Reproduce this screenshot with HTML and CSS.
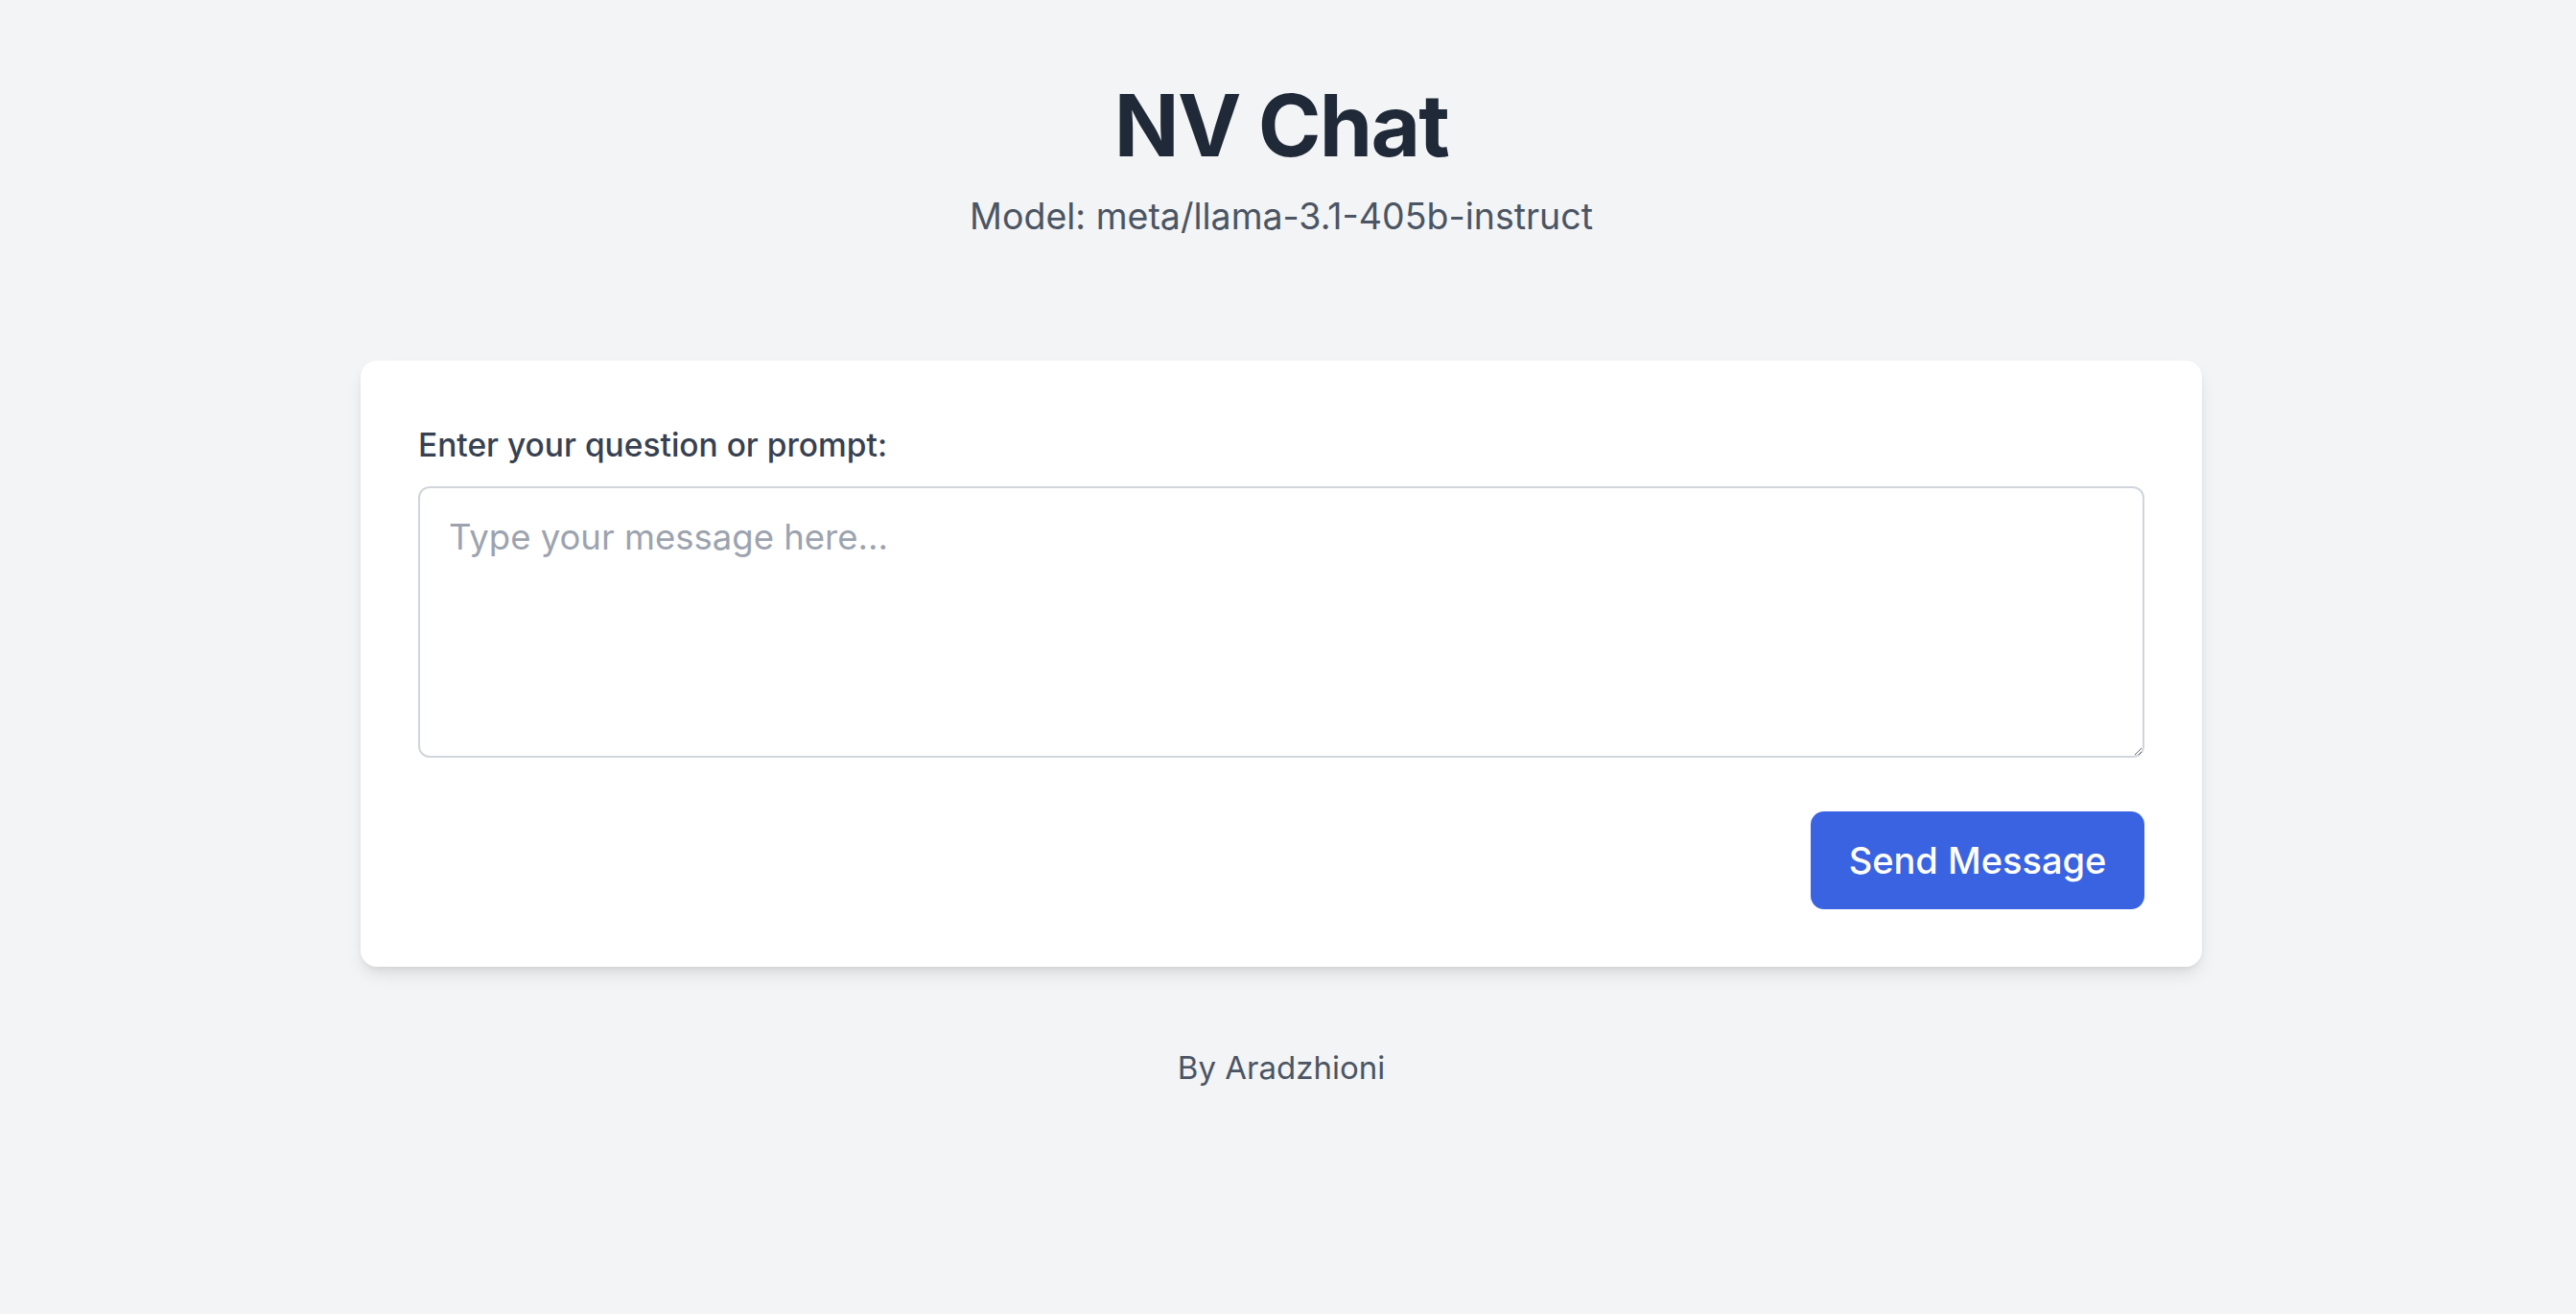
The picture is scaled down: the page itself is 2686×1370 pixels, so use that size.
FILE: index.html
```html
<!DOCTYPE html>
<html lang="en">
<head>
<meta charset="utf-8">
<title>NV Chat</title>
<link rel="stylesheet" href="styles.css">
</head>
<body>
<div class="page">
  <header class="header">
    <h1 class="title">NV Chat</h1>
    <p class="subtitle">Model: meta/llama-3.1-405b-instruct</p>
  </header>
  <main class="card">
    <label class="label" for="prompt">Enter your question or prompt:</label>
    <textarea id="prompt" class="input" placeholder="Type your message here..."></textarea>
    <div class="actions">
      <button class="send" type="button">Send Message</button>
    </div>
  </main>
  <footer class="footer">By Aradzhioni</footer>
</div>
</body>
</html>
```

FILE: styles.css
```css
* { box-sizing: border-box; }
html, body { margin: 0; padding: 0; }
body {
  background: #f3f4f6;
  font-family: Inter, "Noto Sans", "Liberation Sans", sans-serif;
  min-height: 1370px;
}
.page {
  display: flex;
  flex-direction: column;
  align-items: center;
  padding: 86px 14px 0 0;
}
.header {
  display: flex;
  flex-direction: column;
  align-items: center;
}
.title {
  margin: 0;
  font-size: 89px;
  line-height: 1;
  font-weight: 700;
  color: #1f2937;
  letter-spacing: -1.8px;
}
.subtitle {
  margin: 28px 0 0;
  font-size: 37.5px;
  line-height: 1.2;
  color: #4b5563;
}
.card {
  width: 1920px;
  margin-top: 128px;
  background: #ffffff;
  border-radius: 17px;
  padding: 60px;
  box-shadow: 0 10px 18px -3px rgba(0,0,0,0.1), 0 4px 8px -4px rgba(0,0,0,0.1);
  display: flex;
  flex-direction: column;
}
.label {
  font-size: 33.5px;
  line-height: 56px;
  font-weight: 500;
  color: #374151;
  margin-bottom: 15px;
}
.input {
  display: block;
  width: 1800px;
  height: 283px;
  border: 2px solid #d1d5db;
  border-radius: 12px;
  padding: 24px 30px;
  font-family: inherit;
  font-size: 36.5px;
  line-height: 1.5;
  color: #111827;
  background: #fff;
  resize: vertical;
  outline: none;
}
.input::placeholder { color: #9ca3af; }
.actions {
  display: flex;
  justify-content: flex-end;
  margin-top: 56px;
}
.send {
  width: 348px;
  height: 102px;
  border: 0;
  border-radius: 14px;
  background: #3a63e2;
  color: #ffffff;
  font-family: inherit;
  font-size: 38px;
  font-weight: 500;
  cursor: pointer;
}
.footer {
  margin-top: 80px;
  font-size: 33px;
  line-height: 50px;
  color: #4b5563;
}
```
